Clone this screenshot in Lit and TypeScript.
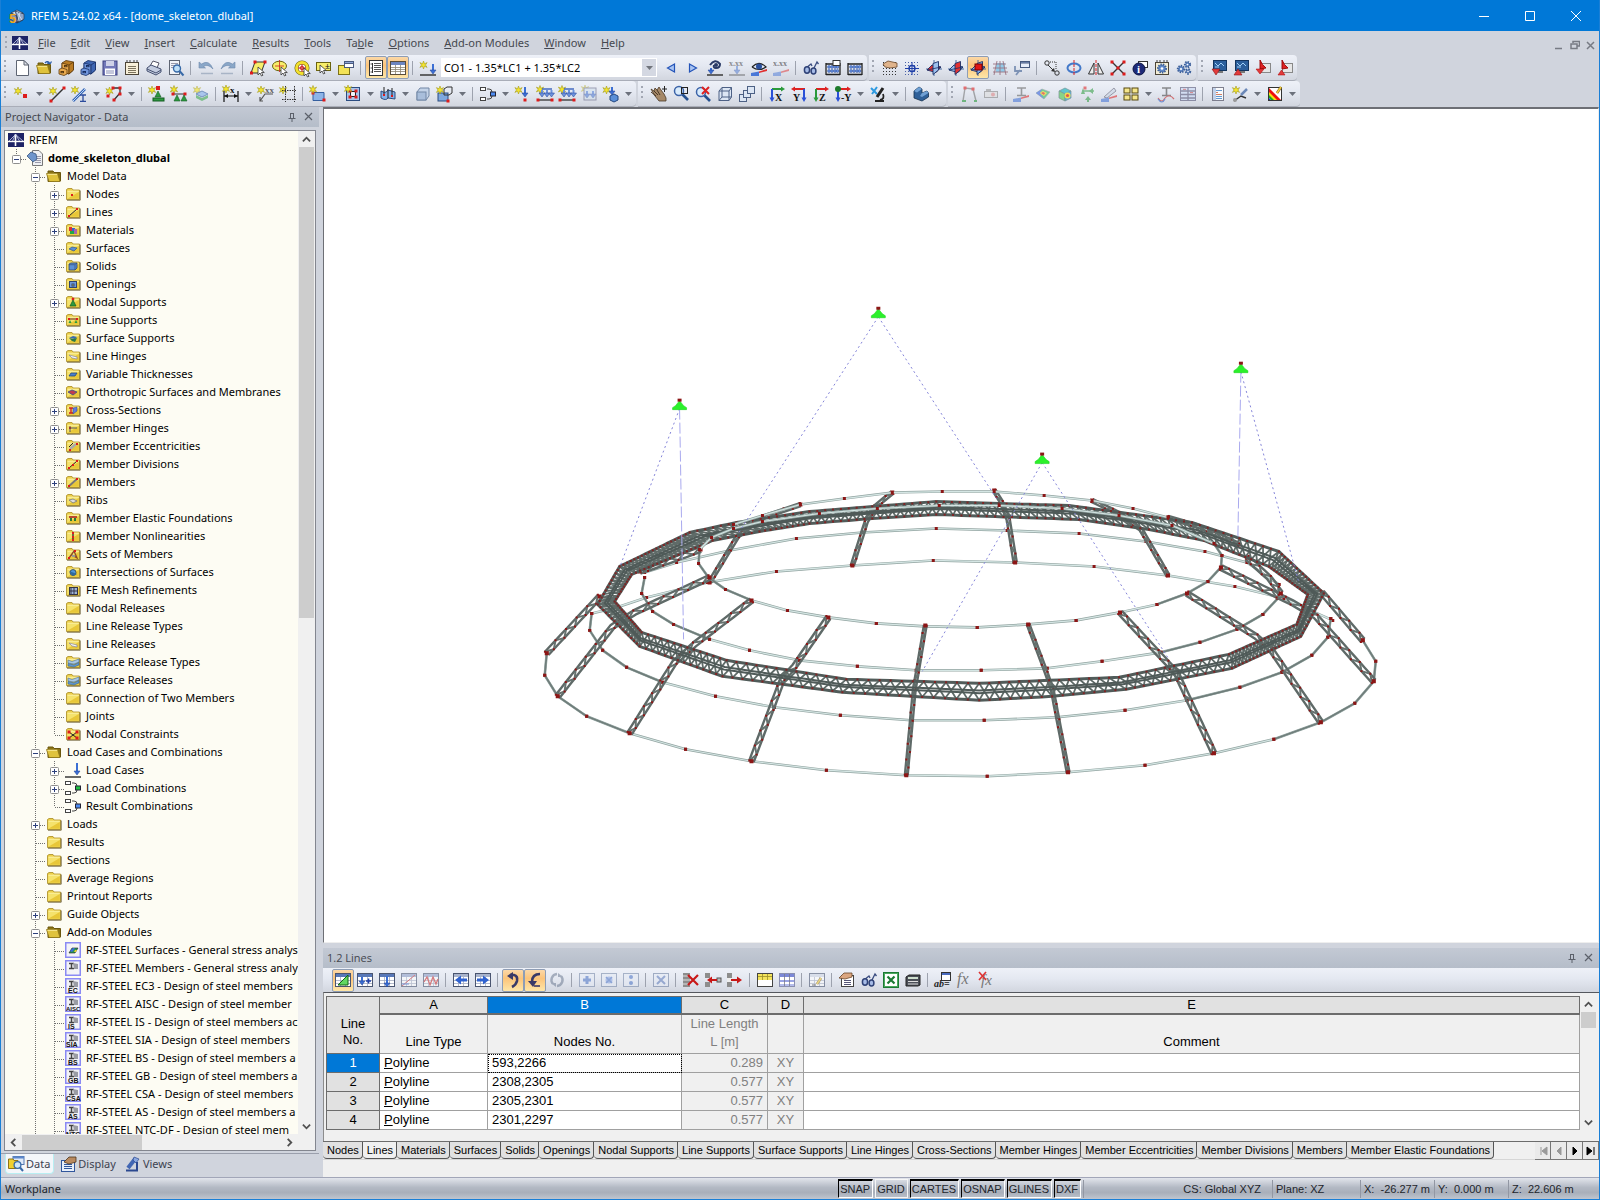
import { LitElement, html, svg, css, nothing } from "lit";
import { customElement } from "lit/decorators.js";
import { classMap } from "lit/directives/class-map.js";

/* ---------- drawing helpers for 16x16 icons ---------- */
const L = (d: string, stroke = "#333", w = 1) => svg`<path d=${d} fill="none" stroke=${stroke} stroke-width=${w}/>`;
const F = (d: string, fill: string, stroke = "none", w = 1) => svg`<path d=${d} fill=${fill} stroke=${stroke} stroke-width=${w}/>`;
const R = (x: number, y: number, w: number, h: number, fill: string, stroke = "none") =>
  svg`<rect x=${x} y=${y} width=${w} height=${h} fill=${fill} stroke=${stroke}/>`;
const C = (x: number, y: number, r: number, fill: string, stroke = "none", w = 1) =>
  svg`<circle cx=${x} cy=${y} r=${r} fill=${fill} stroke=${stroke} stroke-width=${w}/>`;
const T = (x: number, y: number, s: string, size = 8, fill = "#111", family = "Liberation Serif") =>
  svg`<text x=${x} y=${y} font-size=${size} font-family=${family} font-weight="bold" fill=${fill}>${s}</text>`;
const G = (o: number, ...c: unknown[]) => svg`<g opacity=${o}>${c}</g>`;
const dot = (x: number, y: number, s = 3) => R(x - s / 2, y - s / 2, s, s, "#dd1c1c");
const star = (x = 3.5, y = 3.5) =>
  F(`M${x} ${y - 4}L${x + 1} ${y - 1.2}L${x + 3.6} ${y - 2.4}L${x + 2} ${y}L${x + 3.6} ${y + 2.4}L${x + 1} ${y + 1.2}L${x} ${y + 4}L${x - 1} ${y + 1.2}L${x - 3.6} ${y + 2.4}L${x - 2} ${y}L${x - 3.6} ${y - 2.4}L${x - 1} ${y - 1.2}Z`, "#f4e52c", "#a39a1e", 0.6);
const cursor = (x: number, y: number) =>
  F(`M${x} ${y}l0 8l2-2l1.5 3l1.4-.7l-1.4-2.8h2.8z`, "#fff", "#333", 0.8);
const down = (x: number, y = 3, b = 13, c = "#3b6fd4") => [L(`M${x} ${y}V${b - 3}`, c, 2), F(`M${x - 3} ${b - 4}h6l-3 4z`, c, "#1f3f95", 0.5)];
const ground = () => L("M0 15H16", "#444", 1.6);
const pen = (x: number, y: number) => [L(`M${x} ${y}l4-6`, "#8b6a20", 2.6), L(`M${x} ${y}l4-6`, "#f2cf3d", 1.4)];
const gridIcon = (head: string, line = "#4a5570") => [R(0.5, 1.5, 15, 13, "#fff", line), R(1, 2, 14, 3, head), L("M1 8.5H15M1 11.5H15M5.5 5V14M10.5 5V14", "#a3abc0", 0.8)];
const beam = (c = "#666") => L("M4 2H13M8.5 2V9M4 9.5H13", c, 1.6);
const fade = (bottomY = 16) => [F(`M0 ${bottomY}V${bottomY - 3}L8 ${bottomY - 4.5}V${bottomY}Z`, "#4a78d8"), F(`M8 ${bottomY - 4.5}L16 ${bottomY - 7}V${bottomY - 5}L8 ${bottomY - 3}Z`, "#e03030")];
const folder = (extra: unknown = nothing) => [
  F("M1.5 13.5V3.5L3 2.5H7L8 4H14.5V13.5Z", "#ecd04a", "#a98c22", 0.8),
  F("M2.3 12.7V5.2H13.8V12.7Z", "#f5e26c"), F("M2.3 12.7L13.8 6V12.7Z", "#e8c738"),
  L("M2.5 5.2H13.8", "#fdf3a8"), L("M15.2 4.5V14.2H2", "#6f6238", 0.9), extra];
const openFolder = () => [F("M2 13.5V3H7L8 4.5H14.5V13Z", "#8d7614", "#6a560d"), F("M0.5 5.5H11.5L14 13.5H3Z", "#dfc23c", "#8a7216", 0.8), L("M1.5 6.3H11.2", "#f9eb9a")];
const cabinet = (a: string, b: string, c: string) => [F("M4 3L8 0.5L15.5 2V10L11 14L4 12Z", b, c, 0.8), F("M4 3L11 5V14L4 12Z", a, c, 0.8), F("M11 5L15.5 2V10L11 14Z", b, c, 0.8), F("M1 9.5L4 8L9 9.5V14L6 15.5L1 14Z", a, c, 0.8), R(6.5, 5.5, 2.5, 1.2, "#fff", c), R(3, 11.5, 2.5, 1.2, "#fff", c)];
const plane = (a: string, b: string) => [L("M8 0V16M0 9H16", "#27508f", 0.8), F("M1 10L6 5L15 7L10 12.5Z", a, "#1a2f66", 0.9), F("M7 3.5L12.5 1.5V10L7 14.5Z", b, "#1a2f66", 0.9), L("M1 10L15 7", "#1a2f66", 0.8)];
const axis = (x1: string, y1: string, t: string, flip = false) => flip
  ? [L("M14 3H3", x1, 2), F("M0 3L4 0.5V5.5Z", x1), L("M13 3V13", y1, 2), F("M13 16L10.5 11.5H15.5Z", y1), T(2, 14.5, t, 10)]
  : [L("M3 3H13", x1, 2), F("M16 3L12 0.5V5.5Z", x1), L("M3 3V13", y1, 2), F("M3 16L0.5 11.5H5.5Z", y1), T(6, 15, t, 10)];
const mag = (x = 6, y = 6) => [C(x, y, 4.5, "#d9ebfb", "#3b63a8", 1.5), L(`M${x + 3.5} ${y + 3.5}L${x + 9} ${y + 9}`, "#24508f", 2.6)];
const glasses = () => [L("M3 8L8 4L9 6M11 8L14 2L15.5 4", "#3a4c80", 1.3), svg`<ellipse cx="4" cy="10" rx="2.6" ry="3.2" fill="#a6bbe6" stroke="#2e4176" stroke-width="1.5"/><ellipse cx="10.5" cy="11" rx="2.4" ry="3" fill="#a6bbe6" stroke="#2e4176" stroke-width="1.5"/>`];
const abacus = () => [L("M1 3V15M15 3V15M1 14.5H15M1 4H15", "#222", 1.3), [4, 7, 10, 12.5].map(x => [C(x, 7, 1.4, "#6b95e6", "#27458f", 0.5), C(x, 11, 1.4, "#6b95e6", "#27458f", 0.5)])];
const cube = (c1: string, c2: string, c3: string, s = "#3d5470") => [F("M2 5L8 2L14 5L8 8Z", c1, s, 0.7), F("M2 5L8 8V15L2 12Z", c2, s, 0.7), F("M14 5L8 8V15L14 12Z", c3, s, 0.7)];
const combo = (c: string) => [R(0.5, 1.5, 5, 3, "#fff", "#444"), R(0.5, 11.5, 5, 3, "#fff", "#444"), L("M7 3H9Q12 3 12 6M7 13H9Q12 13 12 10", "#444"), R(10.5, 6, 5, 4, c, "#223")];
const gear = (x: number, y: number, r: number, c = "#5f88c9") => [svg`<circle cx=${x} cy=${y} r=${r} fill="none" stroke="#3a5e99" stroke-width="2" stroke-dasharray="1.4 1"/>`, C(x, y, r - 0.6, c, "#3a5e99", 0.6), C(x, y, r / 3, "#fff")];
const dotsGrid = (c = "#333") => svg`<path d="M1 2.5H15M1 5.5H15M1 8.5H15M1 11.5H15M1 14.5H15" stroke=${c} stroke-width="1" stroke-dasharray="1 2" fill="none"/>`;
const monitor = (a: unknown) => [R(2.5, 0.5, 13, 10, "#2b5f9c", "#13355f"), L("M4 3L7 6L10 3L13 6M4 7H8", "#9fd0f8"), R(7, 11, 5, 2, "#777"), a];
const cone = (x: number, y: number) => F(`M${x} ${y}l-3 6h6z`, "#2d9a3f", "#145c22", 0.6);

const icons: Record<string, unknown> = {
  logo: [R(0, 1, 16, 14, "#1d2366"), L("M0 9.5H16", "#fff", 1.4), L("M7.5 2V14", "#fff", 1.6), L("M7.5 2.5L1 9M7.5 2.5L15 9M7.5 2.5L4.5 9M7.5 2.5L11.5 9", "#cdd3ee", 0.8)],
  app: [cube("#cfd8e6", "#7f92ad", "#4c6283", "#22324a"), F("M6 3L15 6V11L10 14Z", "#8da4c6", "#2a3a52", 0.7), L("M8 4L13 12M11 4L9 13", "#dbe5f2", 0.8), T(0, 15, "5", 13, "#f0a818", "Liberation Sans")],
  neu: [F("M2.5 0.5H10L14.5 5V15.5H2.5Z", "#fff", "#5e6573"), F("M10 0.5V5H14.5Z", "#dfe3ea", "#5e6573")],
  open: [openFolder(), L("M9 3Q12 0 14 4M14 4L15.5 1.5M14 4L11 3", "#2e5eaa", 1.3)],
  cab1: cabinet("#e8a94e", "#b97a22", "#5c390b"),
  cab2: cabinet("#6f95dc", "#3f66b3", "#162e66"),
  save: [R(1, 1, 14, 14, "#7278b8", "#3c4180"), R(4, 1, 8, 5, "#cfd2e8"), R(3, 8.5, 10, 6.5, "#fff"), L("M4 11H12M4 13H12", "#8a90b8")],
  report: [R(1.5, 2.5, 13, 12, "#f7efd8", "#4c4538"), L("M3 2V0M6 2V0M10 2V0M13 2V0", "#444"), L("M4 6.5H12M4 8.5H12M4 10.5H12M4 12.5H12", "#7d745e")],
  print: [F("M4 6L7 1L13 3L11 8Z", "#fff", "#556"), F("M1 8L5 5L15 9V12L10 15L1 11Z", "#c3cce0", "#455070"), L("M1 9L10 13L15 10", "#455070")],
  preview: [R(1.5, 0.5, 10, 14, "#f2f4f8", "#5e6573"), L("M3 3.5H10M3 5.5H10M3 7.5H7", "#99a"), C(9, 8.5, 3.5, "#bfe0f8", "#386aa8", 1.4), L("M11.5 11L15.5 15.5", "#386aa8", 2)],
  undo: [F("M1 8V2L3.500 4Q11 -1 15 9Q10 3.500 5.500 6.500L7.500 8Z", "#8aa7c8", "#6f8aac", 0.6), L("M3 13.500H15", "#a8b4c6", 1.5)],
  redo: [F("M15 8V2L12.500 4Q5 -1 1 9Q6 3.500 10.500 6.500L8.500 8Z", "#8aa7c8", "#6f8aac", 0.6), L("M1 13.500H13", "#a8b4c6", 1.5)],
  selPara: [F("M5 2H15L11 13H1Z", "#f7ee6a", "#333"), dot(5, 2), dot(15, 2), dot(1.5, 13), cursor(8, 7)],
  selEll: [F("M0.5 6A7 4.8 0 1 1 14.5 6A7 4.8 0 1 1 .5 6", "#f7ee6a", "#6b6310"), L("M7.5 0V12M3 6H12", "#c22", 0.8), cursor(9, 7)],
  selRing: [C(8, 8, 5.5, "#fff", "#6b6310", 4), C(8, 8, 5.5, "none", "#f3e02e", 2.8), L("M8 4V12M4 8H12", "#c22", 1), C(8, 8, 1.8, "none", "#c22"), cursor(10, 8)],
  selBox: [R(0.5, 2.5, 14, 8, "#f7ee6a", "#6b6310"), T(9, 9, "±", 9), cursor(4, 5)],
  selNote: [R(0.5, 5.5, 11, 9, "#f3e256", "#7d7218"), R(6.5, 1.5, 9, 6, "#fff", "#4a5a80"), R(6.5, 1.5, 9, 2, "#8ca4d6", "#4a5a80")],
  navi: [R(1.5, 0.5, 13, 15, "#fff", "#333"), L("M4.5 3V13", "#333", 1), L("M6 3.5H13M6 5.5H13M6 7.5H13M6 9.5H13M6 11.5H13", "#555"), L("M2.5 4H4M2.5 8H4M2.5 12H4", "#555")],
  tabl: [R(0.5, 1.5, 15, 13, "#fff", "#5a4d3a"), R(1, 2, 14, 3, "#6d85c0"), L("M1 7.5H15M1 9.5H15M1 11.5H15M5.5 5V14M10.5 5V14", "#8d8471", 0.8)],
  newLoad: [star(3.5, 5), ground(), down(13, 4, 14)],
  prev: F("M11.500 4V12L4.500 8Z", "#a9c4f2", "#2353b8", 1.2),
  next: F("M4.500 4V12L11.500 8Z", "#a9c4f2", "#2353b8", 1.2),
  eyeLoad: [L("M3 5Q8 -2 13 4Q13 8 9 8Q6 8 7 5", "#2a3a66", 2), C(9, 5, 2, "#2a3a66"), down(4, 8, 14), ground()],
  xxLoad: G(0.45, T(0, 6, "x.xx", 8), down(8, 6, 14), ground()),
  eyeRes: [F("M1 7Q8 0 15 7Q8 12 1 7", "#dfe8f8", "#222", 1.2), C(8, 6.5, 3, "#2a4f9c"), fade()],
  xxRes: G(0.5, T(0, 6, "x.xx", 8), fade()),
  glasses: glasses(), abacus: [abacus(), R(8, 0.5, 7, 5, "#fff", "#333")], abacus2: abacus(),
  handGrid: [dotsGrid(), F("M1 4L6 1L15 3V7L8 8L3 7Z", "#e0b48c", "#6b472a", 0.8)],
  gridSnap: [dotsGrid("#4a62a8"), C(8, 8.5, 3, "none", "#1f3fa8", 1.4), L("M8 2V15M1 8.5H15", "#1f3fa8", 1)],
  pl1: plane("#e33232", "#9cc1ee"), pl2: plane("#9cc1ee", "#e33232"), pl3: [plane("#9cc1ee", "#7fb0ee"), R(5, 4, 7, 6, "#e01616", "#700")],
  gridMesh: G(0.8, R(4, 3, 9, 9, "#7fc6ea"), L("M2 15L5 1M8 15V1M14 15L11 1M1 4H14M1 8H15M1 12H16", "#8b5a6a", 0.9)),
  props: [L("M2 15L6 10M1 6V11H8", "#7d92b5", 1.8), R(6.5, 1.5, 9, 6, "#e8eefb", "#46597f"), R(6.5, 1.5, 9, 1.5, "#8aa3d0", "#46597f")],
  copy: [C(3, 3, 2.2, "none", "#333"), C(13, 13, 2.2, "none", "#333"), svg`<path d="M6 2H12V9" fill="none" stroke="#333" stroke-dasharray="1 1"/>`, L("M4 5L10 11", "#333"), F("M11 12L7 11L10 8Z", "#333")],
  rotate: [svg`<ellipse cx="8" cy="8" rx="6.500" ry="4.500" fill="none" stroke="#4379c9" stroke-width="2"/>`, svg`<path d="M8 0V16" stroke="#d22" stroke-dasharray="3 1"/>`],
  mirror: [F("M6 3V14H0.5Z", "#eee", "#333"), F("M10 3V14H15.5Z", "#eee", "#333"), svg`<path d="M8 0V16" stroke="#d22" stroke-dasharray="3 1"/>`],
  split: [L("M2 2L14 14M14 2L2 14", "#333", 1.4), dot(2, 2), dot(14, 2), dot(2, 14), dot(14, 14), dot(8, 8)],
  info: [R(6.5, 1.5, 9, 6, "#fff", "#333"), C(7, 9, 6, "#1d2a78", "#0b1240"), T(5, 13, "i", 11, "#fff")],
  gearDoc: [R(1.5, 2.5, 13, 12, "#f2ecd4", "#4c4538"), L("M3 2V0M6 2V0M10 2V0M13 2V0", "#444"), gear(8, 8.5, 4)],
  gears: [gear(5, 9, 3.2), gear(11.5, 4.5, 2.6), gear(12, 11.5, 2.2)],
  mon1: monitor(F("M1 9H9L5 15Z", "#e23b3b", "#8a1414", 0.6)), mon2: monitor(F("M1 15H9L5 9Z", "#e23b3b", "#8a1414", 0.6)),
  pdf1: [R(5.5, 3.5, 10, 9, "#e6e6e6", "#888"), F("M5 0Q7 5 11 8L5 9Z", "#d22", "#900", 0.9), F("M1 9H9L5 14Z", "#e23b3b", "#a00", 0.5)],
  pdf2: [R(5.5, 3.5, 10, 9, "#e6e6e6", "#888"), F("M5 0Q7 5 11 8L5 9Z", "#d22", "#900", 0.9), F("M1 15H8L4.500 10Z", "#e23b3b", "#a00", 0.5)],
  node: [star(4, 5), dot(11, 10, 4)],
  line: [star(4, 5), L("M2 15L14 3", "#333", 1.4), dot(15, 2), dot(2, 15)],
  member: [star(4, 4), L("M2 15L14 3", "#3466b8", 2.6), L("M2 15L14 3", "#bcd4f4", 1), L("M9 9H15M12 9V15M9 15.3H15", "#2b4b9c", 1.3)],
  poly: [star(3.5, 5), L("M6 2H14V7L8 14", "#333", 1.3), dot(7, 2), dot(14, 2), dot(14, 8), dot(8, 14), dot(2, 10)],
  nsup: [star(3, 4), dot(9, 2, 4), cone(9, 5), R(4, 12, 11, 3, "#2d9a3f", "#145c22")],
  lsup: [star(3, 3.5), L("M1 8H15", "#333"), dot(2, 8), dot(14, 8), cone(6, 9), cone(13, 9)],
  ssup: G(0.65, star(4, 4), F("M3 8L9 5L15 8L9 11Z", "#8bb4ea", "#3a66a6"), F("M3 9L9 12L15 9V12L9 15L3 12Z", "#4dae5e")),
  dim: [star(3, 3), L("M1 5V16M15 5V16M1 10H15", "#111", 1.2), F("M1 10L5 8V12ZM15 10L11 8V12Z", "#111"), T(7, 7, "x", 9)],
  label: [star(3, 4), T(7, 7, "xx", 9, "#666"), L("M15 8H7L2 15M2 11V15H5", "#555", 1.2)],
  boxsel: [star(3, 4), svg`<path d="M5.5 0V16M14.5 0V16M2 4.5H16M2 13.5H16" stroke="#333" stroke-dasharray="1.5 1" fill="none"/>`],
  rect: [F("M3 6.5H14V14.5H3Z", "#8db4e8", "#355f9f"), dot(3, 7), dot(14, 14), star(3, 3.5)],
  opening: [R(1.5, 1.5, 13, 13, "#a9c4ea", "#2b4c80"), R(5.5, 5.5, 5, 5, "#f4f6fb", "#222"), dot(5, 5), dot(11, 5), dot(5, 11), dot(11, 11), star(3, 3)],
  shell: [F("M1 5Q6 8 8 4L15 6V13L8 12Q6 15 1 12Z", "#86b1e8", "#2b4c80"), L("M4 1V9M12 2V10M8 3V12", "#222", 1), dot(4, 9, 2), dot(12, 10, 2)],
  solid: [F("M2 6L5 2H14V10L11 14H2Z", "#c4d3e8", "#7287a6"), R(2, 6, 9, 8, "#a9bedb", "#7287a6")],
  solid2: [R(1, 7, 10, 8, "#7ea7df", "#2b4c80"), F("M7 3L10 1H15V7L12 9H7Z", "none", "#333"), star(3, 4), dot(11, 15)],
  combB: combo("#4d8bf0"), combG: combo("#20c040"), loadCase: [down(12, 1, 13), ground()],
  nload: [star(3.5, 4), down(10, 1, 11), dot(10, 14)],
  mload: [star(3, 3.5), L("M5 3H15", "#2b56b8", 1.3), down(5, 4, 11, "#6d93dd"), down(10, 4, 11, "#6d93dd"), down(14.5, 4, 11, "#6d93dd"), L("M0 14H16", "#333", 1.3), dot(1, 14), dot(15, 14)],
  sload: G(0.5, star(4, 3), R(3, 2, 12, 12, "#cfe0ee", "#557"), down(6, 5, 12), down(12, 5, 12)),
  vload: [star(3.5, 4), down(9, 1, 9), F("M7 10L11 8L15 10V14L11 16L7 14Z", "#5a8fd8", "#23467f")],
  hand: [F("M0 3L3 5L4 2L6 4L8 1L10 4L13 8L15 12V15H8L4 10Z", "#a58868", "#4a3826", 0.8), L("M3 5L7 9M6 4L9 9M0 6L5 10", "#4a3826"), L("M11 3H16M13.5 0V6", "#222")],
  zoomBox: [mag(6, 5), R(8.5, 1.5, 6, 6, "none", "#222")], zoomX: [mag(6, 6), L("M7 1L14 8M14 1L7 8", "#d22", 2)],
  wire: [F("M2 5L5 1.5H14.5V11L12 14.5H2Z", "#dce6f4", "#4d6185"), L("M2 5H12V14.5M12 5L14.5 1.5M5 1.5V11H14.5M5 11L2 14.5", "#4d6185")],
  wire3: [R(0.5, 8.5, 7, 7, "#dce6f4", "#4d6185"), R(4.5, 4.5, 7, 7, "#dce6f4", "#4d6185"), R(8.5, 0.5, 7, 7, "#dce6f4", "#4d6185")],
  ax: axis("#2a9a3a", "#2a50d8", "X"), ay: axis("#d22", "#2a50d8", "Y", true), az: axis("#d22", "#2a9a3a", "Z"), amy: [axis("#d22", "#2a50d8", "-Y"), C(3, 3, 3, "#1c7a2c")],
  micro: [L("M1 2L7 8M7 1L2 8", "#2d9ae0", 2), L("M7 11L13 2", "#222", 3), L("M5 15H14M13 8Q15 13 10 14", "#222", 1.8)],
  render: [F("M1 5L6 1L9 3V7L14 5L15.500 7V11L9 15L1 12Z", "#2f6099", "#16324f", 0.8), F("M1 5L6 1L9 3L4 6.500Z", "#6fa0d4"), F("M7 10L9 7L14 5L15.500 7L9 11Z", "#6fa0d4")],
  dfl: G(0.6, L("M2 15L4 2L12 3L15 15", "#777", 1.4), L("M1 15H5M13 15H16", "#2a9a3a", 2), dot(4, 2), dot(12, 3)),
  cam: G(0.6, R(1.5, 5.5, 13, 6, "#ddd", "#888"), R(3, 3, 5, 2, "#999"), C(10, 8.5, 2, "#d88")),
  bfade: G(0.6, beam(), fade()),
  rainbow: G(0.75, F("M1 7L7 3L15 6L9 13Z", "#52c17c", "#999", 0.6), F("M4 7L8 5L12 7L9 10Z", "#f0dc3c"), F("M6 7L8 6L10 7L9 9Z", "#e24a3a"), F("M1 7L7 3L5 7L9 13Z", "#5a7be0")),
  rainCube: [G(0.85, cube("#48c0c8", "#78d278", "#4aa8dc", "#688"), C(10.5, 9.5, 3, "#f4de3c"), C(10.5, 9.5, 1.6, "#e04030"))],
  sup3: G(0.55, L("M3 5H15", "#2a9a3a", 1.5), F("M9 10L6 14H8V16H10V14H12Z", "#2a9a3a"), F("M6 8L4 2L2 8Z", "#2a9a3a"), F("M14 2L10 5L14 8Z", "#2a9a3a"), dot(6, 2)),
  blade: G(0.6, F("M3 11L13 2L15 5L6 12Z", "#c9d5e5", "#667"), fade()),
  tiles: [[1, 9].map(x => [2, 9].map(y => R(x, y, 6, 5, "#f5e68c", "#57490f")))],
  moment: G(0.65, beam("#555"), L("M0 12Q4 18 7 12Q11 7 16 13", "#c33", 1.2), L("M0 13Q4 19 7 13", "#36c", 1.2)),
  resTable: G(0.6, R(0.5, 1.5, 15, 13, "#c9d8f4", "#557"), L("M1 5H15M1 8.5H15M1 12H15M8 2V14", "#557", 1.3), L("M3 3.3H6M10 6.6H13", "#c44")),
  listDoc: G(0.8, R(2.5, 1.5, 11, 13, "#fff", "#667"), L("M4 4.5H12M4 10.5H12M4 12.5H12", "#48c"), L("M4 6.5H8M4 8.5H12", "#c64"), R(3, 2, 3, 12, "#b9cce8")),
  wand: [star(4, 4), L("M2 15L9 10L14 12", "#333", 1.4), L("M9 9L15 3", "#6b88b8", 2.5), C(3, 14, 2, "#999")],
  colors: [R(1.5, 1.5, 13, 13, "#fff", "#333"), F("M2 2L14 14H8L2 8Z", "#e11"), F("M2 6L10 14H6L2 10Z", "#f5e010"), F("M2 9L7 14H4L2 12Z", "#18b020"), F("M2 12L4 14H2Z", "#1030e0"), pen(10, 7)],
  g1: [gridIcon("#5878b8"), F("M13 3V13H3Z", "#62d862", "#156515")], g2: [gridIcon("#5878b8"), down(5, 5, 13), L("M9 9H14M11.5 6.5V11.5", "#1f3fa8", 1.6)],
  g3: [gridIcon("#5878b8"), down(8, 4, 15)], g4: G(0.6, gridIcon("#8fa0c8"), L("M1 14L14 3", "#c33"), L("M1 12H8", "#36c")),
  g5: G(0.6, gridIcon("#8fa0c8"), L("M1 10L4 5L7 13L10 5L13 12L15 7", "#c33", 1.3)),
  gl: [gridIcon("#a9b4cc"), L("M6 8H14", "#2f62d0", 3), F("M2 8L8 3.5V12.5Z", "#2f62d0")], gr: [gridIcon("#a9b4cc"), L("M2 8H10", "#2f62d0", 3), F("M14 8L8 3.5V12.5Z", "#2f62d0")],
  ret1: [L("M5 3H9Q13 4 12 9Q11 13 7 15", "#3a3a68", 2.6), F("M2 4L8 0V8Z", "#3a3a68")], ret2: [L("M13 2Q5 2 5 10", "#3a3a68", 2.6), F("M1 9H10L6 15Z", "#3a3a68"), L("M7 14H13", "#3a3a68", 1.6)],
  cyc: G(0.45, L("M8 2A6 6 0 0 0 4 12M8 14A6 6 0 0 0 12 4", "#55657f", 2.4), F("M2 11H7V15ZM14 5H9V1Z", "#55657f")),
  gp: G(0.5, R(0.5, 1.5, 15, 13, "#e6ebf5", "#66799c"), L("M4 8H12M8 4V12", "#3a66c0", 3)), gx: G(0.5, R(0.5, 1.5, 15, 13, "#e6ebf5", "#66799c"), C(8, 8, 3.5, "#7d9be0"), L("M5 5L11 11M11 5L5 11", "#3a66c0", 1.6)),
  gd: G(0.5, R(0.5, 1.5, 15, 13, "#e6ebf5", "#66799c"), C(8, 5, 2, "#3a66c0"), C(8, 11, 2, "#3a66c0")), gxx: G(0.55, R(0.5, 1.5, 15, 13, "#e6ebf5", "#66799c"), L("M4 4L12 12M12 4L4 12", "#5a78b8", 2)),
  delRow: [R(0, 1, 7, 14, "#8d8d8d"), L("M0 4H7M0 8H7M0 12H7", "#ddd"), L("M5 3L15 13M15 3L5 13", "#c81818", 2.2)],
  rowL: [R(0, 1, 5, 5, "#8d8d8d"), R(0, 10, 5, 5, "#8d8d8d"), R(12, 6, 4, 4, "#bbb", "#555"), L("M5 8H12", "#c81818", 2), F("M2 8L7 4.5V11.5Z", "#c81818")],
  rowR: [R(0, 1, 5, 14, "#8d8d8d"), R(0, 6, 5, 4, "#eee"), L("M4 8H11", "#c81818", 2), F("M15 8L10 4.5V11.5Z", "#c81818")],
  gy: [R(0.5, 1.5, 15, 13, "#fff", "#444"), R(1, 2, 14, 6, "#f4e45c"), L("M5.5 2V8M10.5 2V8M1 4.5H15", "#9c8f28", 0.8)], gb: [R(0.5, 1.5, 15, 13, "#fff", "#8a8fb0"), R(1, 2, 14, 3, "#7b88d8"), R(1, 8, 14, 2, "#9aa4e4"), R(1, 12, 14, 2, "#b5bdec"), L("M5.5 2V14M10.5 2V14", "#778", 0.8)],
  edit: G(0.6, gridIcon("#cfd6e4"), pen(8, 12), L("M7 13H3", "#333")),
  handDoc: [R(2.5, 3.5, 12, 11, "#fff", "#444"), L("M5 8.5H12M5 10.5H12M5 12.5H12", "#557"), F("M0 6L5 1H13V5L6 7Z", "#dba680", "#6b472a", 0.8)],
  excel: [R(0.500, 0.500, 15, 15, "#fff", "#1c7a34"), R(1.500, 1.500, 13, 13, "none", "#4aa85e"), L("M4.500 4.500L11.500 11.500M11.500 4.500L4.500 11.500", "#1c7a34", 2.2)],
  calc: [F("M1 5L4 3H15V13L13 14H1Z", "#4b4f58", "#222"), R(3, 5, 10, 2, "#cfe0cf"), L("M3 9.5H13M3 12H13", "#ddd", 1.2)],
  ab: [R(6.500, 0.500, 9, 8, "#fff", "#333"), R(7, 1, 8, 2, "#4a6cc0"), svg`<text x="-1" y="15" font-size="10" font-style="italic" font-weight="bold" font-family="Liberation Serif" fill="#222">ab=</text>`],
  fx: svg`<text x="0" y="12" font-size="16" font-style="italic" font-family="Liberation Serif" fill="#777">fx</text>`,
  fxx: [svg`<text x="2" y="13" font-size="15" font-style="italic" font-family="Liberation Serif" fill="#777">fx</text>`, L("M0 0L7 8M7 0L0 8", "#d33", 1.6)],
  pinIc: L("M3.5 1V6M6.5 1V6M3 1.5H7M1.5 6.5H8.5M5 7V10", "#5b606a", 1),
  closeIc: L("M1 1L8 8M8 1L1 8", "#5b606a", 1.2),
  dataTab: [R(5, 0.5, 11, 8, "#dfe9f8", "#5578b0"), R(5, 0.5, 11, 2, "#5b86cc"), F("M0.5 12.5V3H5L6 4.5H10V12.5Z", "#f0d030", "#8f7418"), C(9.5, 9, 3.4, "#cfe8fa", "#386aa8", 1.3), L("M12 11.5L15 15", "#386aa8", 2)],
  dispTab: [R(1.5, 4.5, 13, 11, "#e8effa", "#31569c"), L("M4 8.5H12M4 10.5H12M4 12.5H12", "#31569c"), F("M4 6L9 1L16 1V6L9 8Z", "#b98a60", "#4d3520", 0.8)],
  viewTab: [L("M3 12L10 3", "#4267b4", 4), F("M9 1L14 3L11 7L8 4Z", "#8aa8e0", "#2b4890", 0.7), L("M1 14.500H13M12 6V14", "#2b4890", 2)],
  // tree icons
  doc: [F("M5.5 0.5H12L15.5 4V15.5H5.5Z", "#eef0f3", "#777"), L("M8 6.5H14M8 8.5H14M8 10.5H14M8 12.5H14", "#99a"), F("M0 6L4 2L9 4L10 9L6 12Z", "#6e95cc", "#3a577f", 0.8)],
  fo: openFolder(), f: folder(), fNode: folder(dot(7, 9, 2)), fLine: folder([L("M4 12L12 5", "#222"), dot(4, 12, 2), dot(12, 5, 2)]),
  fMat: folder([R(4, 5, 3, 4, "#d33"), R(7, 6, 3, 4, "#36c"), R(5, 9, 4, 3, "#2a4"), R(9, 7, 3, 5, "#a6a")]), fSurf: folder(F("M4 9L7 7L12 8L9 11Z", "#5b8fd4", "#2f5590", 0.7)),
  fSolid: folder([F("M4 6L6 5H12V10L10 12H4Z", "#5b8fd4", "#2f4570", 0.8), L("M10 7V12M4 6.7H10L12 5", "#2f4570", 0.6)]), fOpen: folder([R(4.5, 5.5, 7, 6, "#6f9ad8", "#2f4570"), R(7, 8, 2, 2, "#f3dd62", "#2f4570")]),
  fNsup: folder([dot(8, 5, 2.5), F("M8 6L5 12H11Z", "#2d9a3f", "#145c22", 0.7)]), fLsup: folder([L("M4 7H12", "#622"), dot(4, 7, 2), dot(12, 7, 2), F("M5 8L3.5 11H6.5ZM11 8L9.500 11H12.500Z", "#2d9a3f")]),
  fSsup: folder([F("M4 8L8 6L12 7L10 9Z", "#3a6ab0"), F("M4 8L8 9L12 8L10 12L7 11Z", "#2a7a46")]), fHinge: folder(F("M4 7L8 8L12 9V11L7 10Z", "#f4f4f4", "#889", 0.7)),
  fThick: folder(F("M4 10L6 7H12L10 10Z", "#4a80cc", "#23467f", 0.8)), fOrtho: folder(F("M3 8L7 6L12 8L8 11Z", "#c23c4c", "#36508f", 0.8)),
  fCross: folder([L("M4 6H8M6 6V11M4 11H8", "#c22", 1.4), F("M8 6L12 5V9L8 12Z", "#5f7de0", "#2f4590", 0.5)]), fMh: folder([dot(5, 8, 2), L("M6 8H12M5 6V12", "#555")]),
  fEcc: folder([L("M5 11L11 6", "#aaa", 2.4), dot(5, 12, 2), dot(12, 6, 2), L("M4 9L8 5", "#222")]), fDiv: folder([L("M4 12L12 5", "#222"), dot(4, 12, 2), dot(8, 9, 2), dot(12, 5, 2)]),
  fMem: folder([L("M4 12L12 5", "#777", 2), dot(4, 12, 2), dot(12, 5, 2)]), fRib: folder(F("M4 8L8 7L12 9L8 11Z", "#ddd", "#777", 0.8)),
  fEl: folder([L("M4 7H12", "#a22", 1.6), R(5, 8, 2, 3, "#2a7a36"), R(9, 8, 2, 3, "#2a7a36")]), fNon: folder([L("M8 4V13", "#333", 1.4), dot(8, 5, 2), dot(8, 9, 2), dot(8, 12, 2)]),
  fSets: folder([L("M4 12L9 5L12 12L7 9", "#8a4a28", 1.3), dot(4, 12, 2), dot(10, 5, 2), R(7, 9, 3, 2, "#999")]), fInt: folder([C(8, 8.500, 3, "#4f96d8", "#234", 0.7), F("M4 7L12 10L8 12Z", "#2f6a9c")]),
  fFe: folder([R(4.5, 5.5, 8, 7, "#9db3d8", "#334"), L("M6 6V12M9 6V12M5 9H12", "#334")]), fRel: folder([F("M3 6L7 7.500L14 5V8L9 10L3 9Z", "#a8c8e8", "#4a6f98", 0.6), F("M3 9.500L9 11L14 8.500V11L9 13L3 12Z", "#5f98d4", "#35618f", 0.6)]),
  fCon: folder([L("M4 6L12 12M12 6L4 12", "#222"), dot(4, 6, 3), dot(12, 6, 3), dot(4, 12, 3), dot(12, 12, 3)]),
};

const frame = (inner: unknown) => [R(1, 1, 14, 14, "#f3f3f7", "#8a8af4"), R(0.5, 0.5, 15, 15, "none", "#8a8af4"), inner];
const steel = (code: string) => code === "S"
  ? frame([F("M4 11L7 6H13L10 11Z", "#2a9a58", "#222", 0.6), F("M5 9L8 6H10L7 10Z", "#3b6ae0"), F("M10 8H12L11 10H9Z", "#e8d030")])
  : frame([L("M4 3.500H9M6.500 4V8M4 8.500H9", "#444", 1.5), F("M8 3L13 4V9L9 9Z", "#9a9ca4"), code === "M" ? nothing : T(code.length > 2 ? 1 : 3, 14.5, code, code.length > 3 ? 6 : 7, "#111", "Liberation Sans")]);

const icon = (name: string, size = 16) => {
  const art = name.startsWith("steel:") ? steel(name.slice(6)) : icons[name];
  const v = size < 12 ? 10 : 16;
  return html`<svg class="icon" width=${size} height=${size} viewBox="0 0 ${v} ${v}" aria-hidden="true">${art}</svg>`;
};

/* ---------- model view ---------- */
type P = [number, number];
const lerp = (a: P, b: P, t: number): P => [a[0] + (b[0] - a[0]) * t, a[1] + (b[1] - a[1]) * t];
const len = (a: P, b: P) => Math.hypot(a[0] - b[0], a[1] - b[1]);
const n1 = (v: number) => v.toFixed(1);
const pathOf = (pts: P[]) => "M" + pts.map(p => `${n1(p[0])} ${n1(p[1])}`).join("L");
const nodesOf = (pts: P[], s = 3) => pts.map(p => `M${n1(p[0] - s / 2)} ${n1(p[1] - s / 2)}h${s}v${s}h-${s}z`).join("");

const ringFront: P[][] = [
  [[547, 654], [545, 676], [558, 697], [587, 717], [630, 734], [686, 750], [752, 762], [827, 771], [907, 776], [988, 777], [1069, 773], [1146, 766], [1215, 754], [1275, 740], [1322, 723], [1356, 704], [1375, 682], [1377, 662], [1364, 641]],
  [[592, 614], [590, 631], [603, 651], [627, 668], [663, 683], [716, 697], [775, 708], [841, 716], [912, 721], [985, 721], [1058, 718], [1126, 711], [1188, 701], [1241, 688], [1283, 673], [1313, 656], [1329, 638], [1332, 619]],
  [[645, 578], [642, 594], [653, 612], [674, 625], [710, 640], [750, 651], [800, 661], [858, 667], [917, 671], [982, 671], [1048, 669], [1103, 662], [1162, 653], [1201, 643], [1238, 630], [1264, 615], [1279, 599], [1280, 585]],
  [[700, 550], [699, 564], [709, 578], [726, 590], [752, 601], [788, 611], [829, 618], [877, 624], [926, 627], [978, 628], [1029, 625], [1077, 621], [1121, 613], [1158, 605], [1188, 594], [1209, 582], [1222, 568], [1223, 556], [1215, 544]],
];
const ringBack: P[][] = [
  [[592, 614], [617, 608], [647, 598], [708, 583], [777, 572], [853, 566], [934, 561], [1015, 563], [1095, 567], [1169, 576], [1236, 587], [1285, 599], [1334, 621]],
  [[645, 573], [677, 563], [730, 551], [797, 539], [863, 533], [937, 529], [1008, 531], [1080, 534], [1147, 542], [1206, 552], [1248, 563], [1280, 585]],
];
const ringTop: P[][] = [
  [[700, 550], [712, 538], [734, 529], [763, 522], [820, 514], [878, 509], [940, 506], [1000, 506], [1063, 509], [1120, 516], [1173, 526], [1215, 544]],
  [[734, 525], [763, 516], [801, 505], [845, 499], [893, 493], [943, 492], [995, 492], [1045, 496], [1093, 501], [1134, 509], [1169, 518]],
];
const bandOut: P[] = [[937, 502], [873, 507], [810, 512], [737, 523], [690, 533], [620, 567], [598, 605], [640, 647], [723, 677], [843, 693], [980, 701], [1053, 697], [1127, 690], [1233, 669], [1302, 637], [1325, 594], [1280, 552], [1193, 523], [1137, 515], [1070, 506], [937, 502]];
const bandIn: P[] = [[937, 515], [873, 519], [810, 524], [760, 532], [713, 541], [632, 575], [615, 602], [642, 633], [727, 661], [847, 680], [980, 684], [1050, 681], [1120, 678], [1230, 655], [1298, 625], [1309, 595], [1270, 567], [1205, 541], [1150, 530], [1080, 520], [937, 515]];
const ribsFront: P[][] = [
  [[547, 654], [600, 597]], [[640, 572], [701, 550]],
  [[558, 697], [613, 627], [635, 613], [710, 578]], [[630, 734], [675, 663], [695, 645], [752, 601]],
  [[752, 762], [783, 680], [795, 667], [829, 618]], [[907, 776], [915, 690], [918, 673], [926, 626]],
  [[1069, 773], [1053, 690], [1047, 673], [1029, 625]], [[1215, 754], [1177, 673], [1163, 658], [1121, 613]],
  [[1322, 723], [1272, 650], [1257, 637], [1188, 594]], [[1375, 682], [1317, 617], [1293, 603], [1222, 568]],
  [[1364, 641], [1323, 593]], [[1282, 594], [1270, 578], [1248, 558]],
];
const ribsBack: P[][] = [
  [[1169, 576], [1142, 530], [1120, 514], [1093, 501]], [[1016, 563], [1009, 520], [1002, 502], [995, 491]],
  [[853, 566], [867, 522], [876, 507], [893, 493]], [[710, 583], [738, 537], [760, 519], [801, 505]],
  [[1169, 518], [1200, 527], [1240, 545]],
];

function truss(pts: P[], half: number) {
  const a: P[] = [], b: P[] = [];
  for (let i = 0; i + 1 < pts.length; i++) {
    const d = len(pts[i], pts[i + 1]), k = Math.max(1, Math.round(d / 8));
    const nx = -(pts[i + 1][1] - pts[i][1]) / d * half, ny = (pts[i + 1][0] - pts[i][0]) / d * half;
    for (let j = i ? 1 : 0; j <= k; j++) {
      const p = lerp(pts[i], pts[i + 1], j / k);
      a.push([p[0] + nx, p[1] + ny]); b.push([p[0] - nx, p[1] - ny]);
    }
  }
  const zig = a.map((p, i) => (i % 2 ? p : b[i]));
  return svg`<path d=${pathOf(a) + pathOf(b)} class="chord"/><path d=${pathOf(zig)} class="web"/>
    <path d=${nodesOf(a.filter((_, i) => i % 2), 2) + nodesOf(b.filter((_, i) => !(i % 2)), 2)} class="node"/>
    <path d=${nodesOf([pts[0], pts[pts.length - 1]], 4)} class="node"/>`;
}

function band() {
  const o: P[] = [], n: P[] = [];
  for (let i = 0; i + 1 < bandOut.length; i++) {
    const a = bandOut[i], b = bandOut[i + 1];
    const slope = Math.abs(b[1] - a[1]) / len(a, b);
    const pitch = slope > 0.36 ? 4 : a[1] > 600 ? 12 - slope * 16 : 8;
    const k = Math.max(2, Math.round(len(a, b) / pitch));
    for (let j = i ? 1 : 0; j <= k; j++) { o.push(lerp(a, b, j / k)); n.push(lerp(bandIn[i], bandIn[i + 1], j / k)); }
  }
  const at = (t: number) => o.map((p, i) => lerp(p, n[i], t));
  const q1 = at(0.42), q2 = at(0.58);
  const cross = o.map((p, i) => i + 1 < o.length ? `M${n1(p[0])} ${n1(p[1])}L${n1(n[i + 1][0])} ${n1(n[i + 1][1])}M${n1(n[i][0])} ${n1(n[i][1])}L${n1(o[i + 1][0])} ${n1(o[i + 1][1])}` : "").join("");
  return svg`<path d=${cross} class="cross"/>
    <path d=${pathOf(o) + pathOf(n)} class="main"/><path d=${pathOf(q1) + pathOf(q2)} class="mid"/>
    <path d=${nodesOf(o.map(p => [p[0], p[1]] as P), 2) + nodesOf(n, 2)} class="node soft"/>`;
}

@customElement("dome-view")
export class DomeView extends LitElement {
  static styles = css`
    :host { display: block; min-height: 0; background: #fff; overflow: hidden; }
    svg { display: block; width: 100%; height: 100%; }
    path { fill: none; stroke-linejoin: round; }
    .tube { stroke: #93a5a2; stroke-width: 2.6; }
    .tubeIn { stroke: #d5e6e4; stroke-width: 1.2; }
    .dark { stroke: #6f7d7a; stroke-width: 1.8; }
    .chord { stroke: #5f6a68; stroke-width: 2.4; }
    .web { stroke: #66726f; stroke-width: 2; }
    .cross { stroke: #5f6b68; stroke-width: 1.8; }
    .main { stroke: #515c5a; stroke-width: 3; }
    .mid { stroke: #4f5a58; stroke-width: 2; }
    .node { fill: #8c1616; }
    .soft { fill-opacity: 0.8; }
    .guide { stroke: #8484d8; stroke-width: 1; stroke-dasharray: 2 3; }
    .post { stroke: #a9a9ee; stroke-width: 1; stroke-dasharray: 11 3; }
    .support { fill: #2bf02b; stroke: #1fd51f; stroke-width: 0.6; }
  `;
  private ring(pts: P[]) {
    return svg`<path class="tube" d=${pathOf(pts)}/><path class="tubeIn" d=${pathOf(pts)}/><path class="node" d=${nodesOf(pts)}/>`;
  }
  render() {
    const ends = (r: P[]) => svg`<path class="dark" d=${pathOf(r.slice(0, 5)) + pathOf(r.slice(-6))}/><path class="node" d=${nodesOf(r)}/>`;
    return html`<svg viewBox="324 109 1272 834" preserveAspectRatio="xMinYMin meet" role="img" aria-label="dome skeleton model">
      ${ringBack.map(r => this.ring(r))}
      ${ribsBack.map(r => truss(r, 1.6))}
      ${ringFront.map(r => svg`${this.ring(r)}${ends(r)}`)}
      ${ribsFront.map(r => truss(r, Math.abs(r[0][0] - 950) > 180 ? 2.4 : 1.4))}
      ${band()}
      ${ringTop.map(r => this.ring(r))}
      <path class="guide" d="M680 409L620 568M879 317L738 535M879 317L998 500M1043 463L923 672M1043 463L1170 660M1242 372L1300 583"/>
      <path class="post" d="M680 409L684 640M1242 372L1239 537"/>
      ${([[680, 405], [879, 313], [1242, 368], [1043, 459]] as P[]).map(([x, y]) => svg`
        <path class="support" d="M${x} ${y - 4}L${x + 4} ${y + 1}L${x + 7} ${y + 3}V${y + 5}H${x - 7}V${y + 3}L${x - 4} ${y + 1}Z"/>
        <path class="node" d="M${x - 2} ${y - 6}h4v3h-4z"/>`)}
    </svg>`;
  }
}

/* ---------- page data ---------- */
// "|" separator, trailing "v" entry is a drop-down arrow, "*" prefix marks a pressed button
const bar1 = [
  "neu open cab1 cab2 save report print preview | undo redo | selPara selEll selRing selBox selNote | *navi *tabl | newLoad SELECT prev next eyeLoad xxLoad eyeRes xxRes | glasses abacus abacus2",
  "handGrid gridSnap pl1 pl2 *pl3 gridMesh props | copy rotate mirror split info gearDoc gears",
  "mon1 mon2 pdf1 pdf2",
];
const bar2 = [
  "node v line member v poly v | nsup lsup ssup | dim v label boxsel | rect v opening v shell v solid solid2 v | combB v nload mload mload sload vload v",
  "hand zoomBox zoomX wire wire3 | ax ay az amy v micro v | render v",
  "dfl cam | bfade rainbow rainCube sup3 blade tiles v moment resTable | listDoc wand v colors v",
];
const bar3 = "*g1 g2 g3 g4 g5 | gl gr | *ret1 *ret2 cyc | gp gx gd | gxx | delRow rowL rowR | gy gb | edit | handDoc glasses excel calc | ab fx fxx";

const menus: [string, string, string][] = [
  ["", "F", "ile"], ["", "E", "dit"], ["", "V", "iew"], ["", "I", "nsert"], ["", "C", "alculate"], ["", "R", "esults"], ["", "T", "ools"],
  ["Ta", "b", "le"], ["", "O", "ptions"], ["", "A", "dd-on Modules"], ["", "W", "indow"], ["", "H", "elp"],
];

interface Row { level: number; mark: string; ic: string; text: string; last?: boolean; }
const rows: Row[] = [
  { level: 0, mark: "", ic: "logo", text: "RFEM" },
  { level: 1, mark: "-", ic: "doc", text: "dome_skeleton_dlubal", last: true },
  { level: 2, mark: "-", ic: "fo", text: "Model Data" },
  ...([["+", "fNode", "Nodes"], ["+", "fLine", "Lines"], ["+", "fMat", "Materials"], ["", "fSurf", "Surfaces"], ["", "fSolid", "Solids"], ["", "fOpen", "Openings"],
    ["+", "fNsup", "Nodal Supports"], ["", "fLsup", "Line Supports"], ["", "fSsup", "Surface Supports"], ["", "fHinge", "Line Hinges"], ["", "fThick", "Variable Thicknesses"],
    ["", "fOrtho", "Orthotropic Surfaces and Membranes"], ["+", "fCross", "Cross-Sections"], ["+", "fMh", "Member Hinges"], ["", "fEcc", "Member Eccentricities"],
    ["", "fDiv", "Member Divisions"], ["+", "fMem", "Members"], ["", "fRib", "Ribs"], ["", "fEl", "Member Elastic Foundations"], ["", "fNon", "Member Nonlinearities"],
    ["", "fSets", "Sets of Members"], ["", "fInt", "Intersections of Surfaces"], ["", "fFe", "FE Mesh Refinements"], ["", "f", "Nodal Releases"], ["", "f", "Line Release Types"],
    ["", "fHinge", "Line Releases"], ["", "fRel", "Surface Release Types"], ["", "fRel", "Surface Releases"], ["", "f", "Connection of Two Members"], ["", "f", "Joints"],
    ["", "fCon", "Nodal Constraints"]] as string[][]).map(([mark, ic, text]) => ({ level: 3, mark, ic, text, last: text === "Nodal Constraints" })),
  { level: 2, mark: "-", ic: "fo", text: "Load Cases and Combinations" },
  { level: 3, mark: "+", ic: "loadCase", text: "Load Cases" },
  { level: 3, mark: "+", ic: "combG", text: "Load Combinations" },
  { level: 3, mark: "", ic: "combB", text: "Result Combinations", last: true },
  { level: 2, mark: "+", ic: "f", text: "Loads" },
  ...["Results", "Sections", "Average Regions", "Printout Reports"].map(text => ({ level: 2, mark: "", ic: "f", text })),
  { level: 2, mark: "+", ic: "f", text: "Guide Objects" },
  { level: 2, mark: "-", ic: "fo", text: "Add-on Modules" },
  ...([["S", "Surfaces - General stress analys"], ["M", "Members - General stress analy"], ["EC", "EC3 - Design of steel members"],
    ["AISC", "AISC - Design of steel member"], ["IS", "IS - Design of steel members ac"], ["SIA", "SIA - Design of steel members"],
    ["BS", "BS - Design of steel members a"], ["GB", "GB - Design of steel members a"], ["CSA", "CSA - Design of steel members"],
    ["AS", "AS - Design of steel members a"], ["NTC", "NTC-DF - Design of steel mem"]])
    .map(([c, t]) => ({ level: 3, mark: "", ic: "steel:" + c, text: "RF-STEEL " + t })),
];

const sheets = ["Nodes", "Lines", "Materials", "Surfaces", "Solids", "Openings", "Nodal Supports", "Line Supports", "Surface Supports", "Line Hinges", "Cross-Sections", "Member Hinges", "Member Eccentricities", "Member Divisions", "Members", "Member Elastic Foundations"];
const lines = [["593,2266", "0.289"], ["2308,2305", "0.577"], ["2305,2301", "0.577"], ["2301,2297", "0.577"]];

const chevron = (d: string) => html`<svg class="icon" width="9" height="9" viewBox="0 0 10 10" aria-hidden="true"><path d=${d} fill="none" stroke="#505050" stroke-width="2"/></svg>`;
const UP = "M1 7L5 3L9 7", DOWN = "M1 3L5 7L9 3", LEFT = "M7 1L3 5L7 9", RIGHT = "M3 1L7 5L3 9";

@customElement("app-root")
export class AppRoot extends LitElement {
  static styles = css`
    :host { display: block; font: 11px/18px "Noto Sans", "Open Sans", sans-serif; color: #000; }
    * { box-sizing: border-box; }
    button, select { font: inherit; color: inherit; border: 0; background: none; padding: 0; margin: 0; border-radius: 0; }
    .icon { display: block; overflow: visible; flex: none; }
    .app { display: flex; flex-direction: column; height: 100vh; border: 1px solid #1a7fd6; border-top: 0; background: #d0d4dd; }
    .title { display: flex; align-items: center; height: 31px; flex: none; background: #0078d7; color: #fff; padding-left: 8px; gap: 6px; }
    .title h1 { flex: 1; margin: 0; font: inherit; }
    .wins { display: flex; }
    .win { width: 46px; height: 31px; display: grid; place-items: center; }
    .menu { display: flex; align-items: center; height: 24px; flex: none; padding-left: 4px; color: #45484f; }
    .menu .icon { margin-right: 2px; }
    .menu button { padding: 0 7px 0 8px; white-space: nowrap; }
    .menu .spacer { flex: 1; }
    .menu .mdi { padding: 5px 3px 0 3px; }
    .bars { display: flex; height: 26px; flex: none; gap: 2px; }
    .bar { display: flex; align-items: center; height: 26px; padding: 0 1px 0 3px; border-bottom: 1px solid #a9adb8; border-radius: 0 4px 4px 0; background: linear-gradient(#eef1f8, #e4e8f1 45%, #d2d6df); }
    .grip { width: 2px; height: 15px; margin-right: 5px; background: repeating-linear-gradient(#a2a7b3 0 2px, transparent 2px 5px); flex: none; }
    .tb { width: 22px; height: 23px; display: grid; place-items: center; flex: none; }
    .tb.on { background: linear-gradient(#fbd8a8, #fcc47a 40%, #fee6a8); border: 1px solid #8e9db5; border-radius: 2px; }
    .arrow { width: 13px; height: 23px; display: grid; place-items: center; flex: none; }
    .sep { width: 1px; height: 14px; margin: 0 4px 0 3px; background: #9da2ae; flex: none; }
    .pick { display: flex; width: 216px; height: 19px; margin: 0 3px 0 2px; background: #fff; }
    .pick select { flex: 1; min-width: 0; appearance: none; padding-left: 3px; color: #000; background: #fff; line-height: 18px; }
    .pick span { width: 14px; display: grid; place-items: center; background: #d4d8e2; margin: 1px; }
    .main { flex: 1; min-height: 0; display: grid; grid-template-columns: 318px minmax(0, 1fr); column-gap: 4px; }
    .nav { display: flex; flex-direction: column; min-height: 0; }
    .cap { display: flex; align-items: center; height: 20px; flex: none; padding: 0 5px 0 4px; gap: 7px; background: linear-gradient(#c3c9d4, #b5bdc9); color: #44474f; }
    .cap h2 { flex: 1; margin: 0; font: inherit; }
    .box { flex: 1; min-height: 0; display: grid; grid-template: minmax(0, 1fr) 16px / minmax(0, 1fr) 17px; margin: 3px 3px 2px 3px; border: 1px solid #83868f; background: #fdfcf3; }
    .tree { overflow: hidden; margin: 0; padding: 0 0 0 3px; list-style: none; }
    .row { display: flex; height: 18px; align-items: center; white-space: nowrap; }
    .row .text { padding-left: 5px; }
    .row .bold { font-weight: 700; }
    .cell { width: 19px; height: 18px; flex: none; display: block; }
    .cell.first { margin-left: -1px; }
    .cell.tail { margin-right: 1px; }
    .vs, .hs { display: flex; align-items: center; background: #f0f0f0; }
    .vs { flex-direction: column; }
    .vs .knob { flex: none; width: 15px; background: #cdcdcd; }
    .vs .rest, .hs .rest { flex: 1; }
    .hs .knob { height: 15px; background: #cdcdcd; }
    .sb { width: 17px; height: 16px; display: grid; place-items: center; flex: none; }
    .ntabs { display: flex; height: 24px; flex: none; padding-left: 4px; gap: 4px; color: #3c4250; border-top: 1px solid #9a9fac; }
    .ntabs button { display: flex; align-items: center; gap: 2px; height: 20px; padding: 0 3px 0 2px; }
    .ntabs .on { background: #f4f6fa; border: 1px solid #b8eef2; border-top: 0; border-radius: 0 0 4px 4px; }
    .work { display: flex; flex-direction: column; min-width: 0; min-height: 0; }
    dome-view { flex: 1; border: 1px solid #6d6f75; border-top-width: 2px; border-right-color: #eee; border-bottom-color: #eee; }
    .data { flex: none; margin-top: 5px; background: #f0f0f0; font: 13px/16px "Liberation Sans", Arial, sans-serif; }
    .data .cap { font: 11px/18px "Open Sans", "Noto Sans", sans-serif; }
    .data .bar { height: 24px; border-radius: 0; border: 0; padding-left: 9px; }
    .data .grip { display: none; }
    .sheet { display: grid; grid-template-columns: minmax(0, 1fr) 17px; border-top: 1px solid #55585e; border-left: 1px solid #8c8c8c; padding: 3px 2px 11px 2px; }
    table { width: 100%; border-collapse: collapse; table-layout: fixed; border: 1px solid #6c6c6c; }
    th { font-weight: 400; padding: 0; }
    td { border: 1px solid #a0a0a0; padding: 0 4px; height: 19px; background: #fff; overflow: hidden; white-space: nowrap; }
    .letters th { height: 17px; border: 1px solid #6c6c6c; border-bottom-width: 2px; background: #e1e1e1; }
    .letters .sel, tbody .sel { background: #0078d7; color: #fff; }
    .letters .corner { background: #e1e1e1; border-bottom-width: 1px; line-height: 16px; vertical-align: bottom; padding-bottom: 5px; }
    .names th { height: 39px; border: 1px solid #a0a0a0; background: #f0f0f0; vertical-align: bottom; padding-bottom: 2px; line-height: 18px; }
    .names .soft, td.soft { color: #808080; background: #f0f0f0; }
    td.soft { text-align: right; }
    td.mid { text-align: center; }
    tbody th { border: 1px solid #6c6c6c; background: #e1e1e1; }
    td.focus { outline: 1px dotted #000; outline-offset: -1px; }
    .wA { width: 108px; } .w0 { width: 53px; } .wB { width: 194px; } .wC { width: 86px; } .wD { width: 36px; }
    .sheetbar { display: flex; height: 36px; border-top: 1px solid #6c6c6c; }
    .tabs { display: flex; flex: 1; min-width: 0; height: 18px; overflow: hidden; border-bottom: 1px solid #d6d6d6; font-size: 11px; line-height: 16px; }
    .tabs button { flex: none; height: 17px; padding: 0 3px 0 4px; background: #e1e1e1; border: 1px solid #555; border-width: 0 1px 1px 0; border-radius: 0 0 4px 4px; white-space: nowrap; }
    .tabs .on { background: #f0f0f0; }
    .pager { display: flex; }
    .pager button { width: 16px; height: 18px; display: grid; place-items: center; background: #eaeaea; border: 1px solid #777; border-width: 0 1px 1px 0; }
    .status { display: flex; align-items: center; height: 22px; flex: none; border-top: 1px solid #a2a6b8; background: linear-gradient(#e2e5ec, #b3b9c4 45%, #a9afba 70%, #c0c5cf); color: #22252b; }
    .status .msg { flex: 1; padding-left: 4px; }
    .status button { height: 19px; padding: 0 2px 0 1px; margin-right: 2px; border: 1px solid #f6f6f6; font: 11px/16px "Liberation Sans", Arial, sans-serif; }
    .status button.on { border-color: #000 #fff #fff #000; border-top-width: 2px; }
    .pane { flex: none; border-left: 1px solid #9297a3; padding-left: 3px; white-space: pre; height: 18px; font: 11px/18px "Liberation Sans", Arial, sans-serif; }
    .cs { width: 189px; text-align: right; padding-right: 11px; }
    .plane { width: 88px; } .xy { width: 74px; } .z { width: 91px; }
  `;

  private tools(spec: string) {
    return spec.split(" ").map(t => {
      if (t === "|") return html`<i class="sep"></i>`;
      if (t === "v") return html`<button class="arrow" aria-label="More"><svg width="7" height="4" viewBox="0 0 7 4"><path d="M0 0H7L3.5 4Z" fill="#6c717c"/></svg></button>`;
      if (t === "SELECT") return html`<label class="pick"><select aria-label="Load case"><option>CO1 - 1.35*LC1 + 1.35*LC2</option></select><span><svg width="7" height="4" viewBox="0 0 7 4"><path d="M0 0H7L3.5 4Z" fill="#70747c"/></svg></span></label>`;
      const on = t.startsWith("*"), name = on ? t.slice(1) : t;
      return html`<button class=${classMap({ tb: true, on })} aria-label=${name}>${icon(name)}</button>`;
    });
  }

  private cell(kind: string, mark: string, first: boolean, tail: boolean) {
    const v = kind === "line" || kind === "tee" ? "M9.5 0V18" : kind === "end" ? "M9.5 0V10" : "";
    return html`<svg class=${classMap({ cell: true, first, tail })} viewBox="0 0 19 18" aria-hidden="true">
      <path d=${v + (kind === "tee" || kind === "end" ? "M10 10.5H19" : "")} stroke="#707070" stroke-dasharray="1 1" fill="none"/>
      ${mark ? svg`<rect x="5.5" y="6.5" width="8" height="8" rx="1" fill="#fff" stroke="#8e8e8e"/><path d=${mark === "+" ? "M7 10.5H12M9.5 8V13" : "M7 10.5H12"} stroke="#2c3f7c"/>` : nothing}
    </svg>`;
  }

  private row(r: Row) {
    const cells: unknown[] = [];
    for (let i = 1; i <= r.level; i++)
      cells.push(this.cell(i < r.level ? (i === 1 ? "blank" : "line") : r.last ? "end" : "tee", i < r.level ? "" : r.mark, i === 1, i === r.level));
    return html`<li class="row">${cells}${icon(r.ic)}<span class=${classMap({ text: true, bold: r.level === 1 })}>${r.text}</span></li>`;
  }

  private caption(text: string) {
    return html`<div class="cap"><h2>${text}</h2><button aria-label="Pin">${icon("pinIc", 10)}</button><button aria-label="Close">${icon("closeIc", 10)}</button></div>`;
  }

  render() {
    return html`<div class="app">
      <header class="title">${icon("app")}<h1>RFEM 5.24.02 x64 - [dome_skeleton_dlubal]</h1>
        <div class="wins">
        ${[["Minimize", "M0 5.5H10"], ["Maximize", "M0.5 0.5H9.5V9.5H0.5Z"], ["Close", "M0 0L10 10M10 0L0 10"]].map(([n, d]) => html`<button class="win" aria-label=${n}><svg width="10" height="10" viewBox="0 0 10 10"><path d=${d} fill="none" stroke="#fff"/></svg></button>`)}
        </div>
      </header>
      <nav class="menu"><i class="grip"></i>${icon("logo")}
        ${menus.map(([a, u, b]) => html`<button>${a}<u>${u}</u>${b}</button>`)}
        <span class="spacer"></span>
        ${[["Minimize window", "M1 8.5H8"], ["Restore window", "M3 3V1.5H9.5V6H7.5M1 4H7V8.5H1Z"], ["Close window", "M1 2L8 9M8 2L1 9"]].map(([n, d]) => html`<button class="mdi" aria-label=${n}><svg width="10" height="10" viewBox="0 0 10 10"><path d=${d} fill="none" stroke="#777b84" stroke-width="1.5"/></svg></button>`)}
      </nav>
      ${[bar1, bar2].map(b => html`<div class="bars">${b.map(s => html`<div class="bar" role="toolbar"><i class="grip"></i>${this.tools(s)}</div>`)}</div>`)}
      <main class="main">
        <section class="nav">
          ${this.caption("Project Navigator - Data")}
          <div class="box">
            <ul class="tree">${rows.map(r => this.row(r))}</ul>
            <div class="vs"><span class="sb">${chevron(UP)}</span><span class="knob" style="height:47%"></span><span class="rest"></span><span class="sb">${chevron(DOWN)}</span></div>
            <div class="hs"><span class="sb">${chevron(LEFT)}</span><span class="knob" style="width:41%"></span><span class="rest"></span><span class="sb">${chevron(RIGHT)}</span></div>
            <div class="hs"></div>
          </div>
          <div class="ntabs"><button class="on">${icon("dataTab")}Data</button><button>${icon("dispTab")}Display</button><button>${icon("viewTab")}Views</button></div>
        </section>
        <section class="work">
          <dome-view></dome-view>
          <div class="data">
            ${this.caption("1.2 Lines")}
            <div class="bar" role="toolbar">${this.tools(bar3)}</div>
            <div class="sheet">
              <table>
                <colgroup><col class="w0"><col class="wA"><col class="wB"><col class="wC"><col class="wD"><col></colgroup>
                <thead>
                  <tr class="letters"><th class="corner" rowspan="2">Line<br>No.</th><th>A</th><th class="sel">B</th><th>C</th><th>D</th><th>E</th></tr>
                  <tr class="names"><th>Line Type</th><th>Nodes No.</th><th class="soft">Line Length<br>L [m]</th><th></th><th>Comment</th></tr>
                </thead>
                <tbody>${lines.map(([n, l], i) => html`<tr><th class=${i ? "" : "sel"}>${i + 1}</th><td><u>P</u>olyline</td><td class=${i ? "" : "focus"}>${n}</td><td class="soft">${l}</td><td class="soft mid">XY</td><td></td></tr>`)}</tbody>
              </table>
              <div class="vs"><span class="sb">${chevron(UP)}</span><span class="knob" style="height:16px"></span><span class="rest"></span><span class="sb">${chevron(DOWN)}</span></div>
            </div>
            <div class="sheetbar">
              <div class="tabs">${sheets.map(s => html`<button class=${s === "Lines" ? "on" : ""}>${s}</button>`)}</div>
              <div class="pager">${[["First", "M3 1V9M9 1V9L4 5Z", "#999"], ["Previous", "M7 1V9L3 5Z", "#999"], ["Next", "M3 1V9L7 5Z", "#000"], ["Last", "M1 1V9L6 5ZM8 1V9", "#000"]].map(([n, d, c]) => html`<button aria-label=${n}><svg width="10" height="10" viewBox="0 0 10 10"><path d=${d} fill=${c} stroke=${c}/></svg></button>`)}</div>
            </div>
          </div>
        </section>
      </main>
      <footer class="status">
        <span class="msg">Workplane</span>
        ${["SNAP", "GRID", "CARTES", "OSNAP", "GLINES", "DXF"].map(s => html`<button class=${s === "GRID" ? "" : "on"}>${s}</button>`)}
        <span class="pane cs">CS: Global XYZ</span><span class="pane plane">Plane: XZ</span>
        <span class="pane xy">X:  -26.277 m</span><span class="pane xy">Y:  0.000 m</span><span class="pane z">Z:  22.606 m</span>
      </footer>
    </div>`;
  }
}
